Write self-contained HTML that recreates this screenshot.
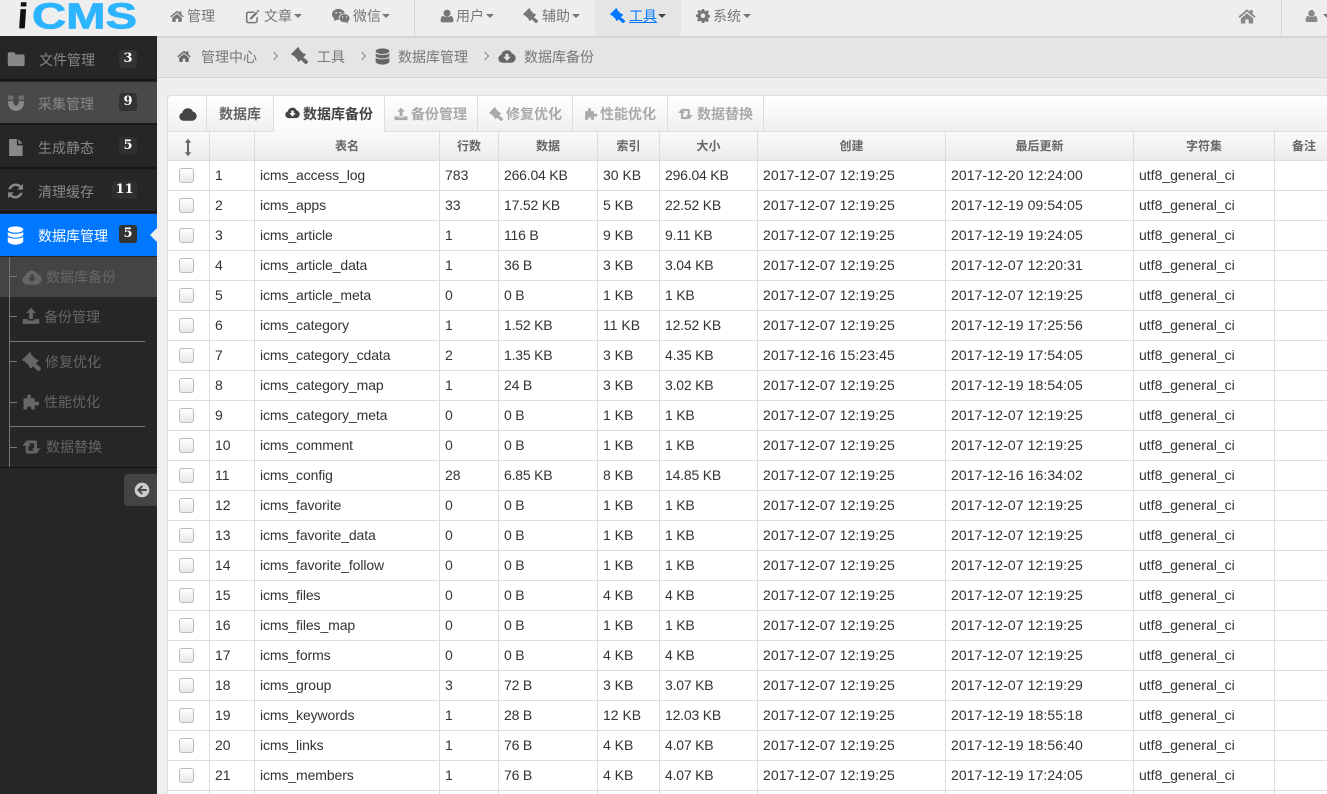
<!DOCTYPE html>
<html lang="zh"><head><meta charset="utf-8"><title>iCMS</title>
<style>
html,body{margin:0;padding:0;width:1327px;height:794px;overflow:hidden}
body{position:relative;background:#eee;font:14px/20px "Liberation Sans","Noto Sans CJK SC",sans-serif;color:#333}
.a{position:absolute;white-space:nowrap}
svg.i{position:absolute;fill:currentColor;display:block}
#top{position:absolute;left:0;top:0;width:1327px;height:36px;background:#eee;border-bottom:2px solid #d6d6d6;color:#777}
#crumb{position:absolute;left:157px;top:38px;width:1170px;height:39px;background:#e5e5e5;border-bottom:1px solid #d4d4d4;color:#777}
#side{position:absolute;left:0;top:36px;width:157px;height:758px;background:#262626;color:#888}
.car{position:absolute;width:0;height:0;border:4px solid transparent;border-top-color:currentColor;border-bottom:0;top:14px}
.sep{position:absolute;width:1px;background:#d6d6d6;top:0;height:36px}
.mi{position:absolute;left:0;width:157px;height:42px;background:#262626;border-bottom:2px solid #161616}
.bd{position:absolute;top:13px;height:18px;min-width:18px;background:#333;border-radius:3px;color:#fff;font:bold 13px/18px "DejaVu Serif","Liberation Serif",serif;text-align:center}
.tk{position:absolute;left:10px;width:7px;height:1px;background:#777}
.hr{position:absolute;left:10px;width:135px;height:1px;background:#777}
#box{position:absolute;left:167px;top:95px;width:1160px;height:699px;overflow:hidden;background:#fff;border-left:1px solid #ddd;border-top:1px solid #ddd;border-radius:4px 0 0 0}
#tabs{position:absolute;left:0;top:0;width:1160px;height:35px;background:linear-gradient(#fff,#f0f0f0);border-bottom:1px solid #ddd;color:#aaa;font-weight:bold}
.ts{position:absolute;top:0;width:1px;height:35px;background:#ddd}
table{position:absolute;left:0;top:36px;border-collapse:separate;border-spacing:0;table-layout:fixed;width:1166px}
th{height:28px;padding:0;font-size:12px;line-height:16px;font-weight:bold;color:#666;background:linear-gradient(#fafafa,#ececec);border-right:1px solid #ddd;border-bottom:1px solid #ddd;text-align:center}
td{height:27px;padding:0 0 2px 5px;border-right:1px solid #ddd;border-bottom:1px solid #ddd;color:#333;white-space:nowrap;overflow:hidden}
td:nth-child(3){letter-spacing:-.1px}
td:nth-child(5),td:nth-child(7){letter-spacing:-.2px}
td:nth-child(8),td:nth-child(9){letter-spacing:.1px}
td.c{padding:0;height:29px}
td.c i{display:block;width:13px;height:13px;margin:0 0 0 11px;border:1px solid #bbb;border-radius:3px;background:linear-gradient(#fff,#e8e8e8)}
</style></head><body>
<svg width="0" height="0" style="position:absolute"><defs>
<symbol id="home" viewBox="0 0 24 24"><path d="M12 3 0.5 12.6l1.6 1.9L12 6.2l9.9 8.3 1.6-1.9-4-3.4V4h-3.4v2.3zM12 8.4 3.8 15.2V22h6v-5.5h4.4V22h6v-6.8z"/></symbol>
<symbol id="edit" viewBox="0 0 24 24"><path d="M5 4h11l-2 2.4H5.400A1.500 1.500 0 0 0 4 8v11a1.500 1.500 0 0 0 1.400 1.500h11A1.500 1.500 0 0 0 18 19v-5l2.400-2.400V19a4 4 0 0 1-4 4H5a4 4 0 0 1-3.500-4V8A4 4 0 0 1 5 4zM20.500 1 23 3.500l-1.800 1.800-2.500-2.500zM17.800 4.100l2.500 2.500-9.500 9.500-3.300.8.800-3.300z"/></symbol>
<symbol id="wechat" viewBox="0 0 28 24"><ellipse cx="10" cy="9.500" rx="10" ry="8.500"/><path d="M4 15 3 20l6-3z"/><ellipse cx="19.500" cy="15.500" rx="8.500" ry="7" stroke="#eee" stroke-width="1.200"/><path d="M24 20l2 3.500-5-2z"/><circle cx="6.500" cy="7" r="1.400" fill="#eee"/><circle cx="13" cy="7" r="1.400" fill="#eee"/><circle cx="16.500" cy="13.500" r="1.100" fill="#eee"/><circle cx="22.500" cy="13.500" r="1.100" fill="#eee"/></symbol>
<symbol id="user" viewBox="0 0 24 24"><circle cx="12" cy="7" r="6"/><path d="M5 11.500C7 14 17 14 19 11.500 22 12.500 23 17 23 20c0 2-1.500 3-3 3H4c-1.500 0-3-1-3-3 0-3 1-7.500 4-8.500z"/></symbol>
<symbol id="gavel" viewBox="0 0 24 24"><path d="M10 0 0 10l2 2 1-.5 6.500 6.500-.5 1 2 2L21 11l-2-2-1 .5L11.500 3l.5-1zM14.500 12.500 11.500 15.500l7.800 7.800c.9.900 2.300.900 3.200 0l.8-.8c.9-.9.900-2.300 0-3.200z"/></symbol>
<symbol id="cog" viewBox="0 0 24 24"><path fill-rule="evenodd" d="M10 1h4l.6 3.200 2 .8L19.400 3.200l2.800 2.800-1.800 2.800.8 2 3.200.6v4l-3.200.6-.8 2 1.800 2.800-2.800 2.800-2.800-1.800-2 .8L14 25h-4l-.6-3.200-2-.8-2.800 1.800-2.800-2.800 1.800-2.800-.8-2L0 14.600v-4l3.200-.6.800-2L2.200 5.200 5 2.400l2.800 1.800 2-.8zM12 8.600a4 4 0 1 0 0 8 4 4 0 0 0 0-8z" transform="translate(0 -1)"/></symbol>
<symbol id="folder" viewBox="0 0 24 24"><path d="M1 5.500A2.500 2.500 0 0 1 3.500 3h5A2.500 2.500 0 0 1 11 5.500V6h10a2.500 2.500 0 0 1 2.500 2.500V19a2.500 2.500 0 0 1-2.500 2.500H3.500A2.500 2.500 0 0 1 1 19z"/></symbol>
<symbol id="magnet" viewBox="0 0 24 24"><path d="M1.500 2h7v6h-7zM15.500 2h7v6h-7z" opacity=".6"/><path d="M1.500 9.500h7V12a3.500 3.500 0 0 0 7 0V9.500h7V12a10.500 10.500 0 0 1-21 0z"/></symbol>
<symbol id="file" viewBox="0 0 24 24"><path d="M3 0h11v9h8v15H3zM16 0l6 6.500h-6z"/></symbol>
<symbol id="refresh" viewBox="0 0 24 24"><path d="M22.500 2v8h-8l3-3a7.500 7.500 0 0 0-12 2.500H1.800A11 11 0 0 1 20 4.500zM1.500 22v-8h8l-3 3a7.500 7.500 0 0 0 12-2.500h3.700A11 11 0 0 1 4 19.500z"/></symbol>
<symbol id="db" viewBox="0 0 24 27"><ellipse cx="12" cy="5" rx="11" ry="4.500"/><path d="M1 8.300C3 11.800 21 11.800 23 8.300V12C23 14.500 18 16.500 12 16.500S1 14.500 1 12z"/><path d="M1 15.300C3 18.800 21 18.800 23 15.300V21.500C23 24 18 26.500 12 26.500S1 24 1 21.500z"/></symbol>
<symbol id="cloud" viewBox="0 0 24 24"><path d="M6 21A5.500 5.500 0 0 1 4.500 10.200 7.500 7.500 0 0 1 18.600 8.600 6.300 6.300 0 0 1 18 21z"/></symbol>
<symbol id="clouddl" viewBox="0 0 24 24"><path fill-rule="evenodd" d="M6 21A5.500 5.500 0 0 1 4.500 10.200 7.500 7.500 0 0 1 18.600 8.600 6.300 6.300 0 0 1 18 21zM10 9v4H7l5 5.500 5-5.500h-3V9z"/></symbol>
<symbol id="upload" viewBox="0 0 24 24"><path d="M12 1l6.500 7H14.500v8h-5V8H5.500zM1 16h6.500v2h9v-2H23v6.500H1z"/></symbol>
<symbol id="puzzle" viewBox="0 0 24 24"><path d="M2 7h5.500C6 4 7 2 9.500 2S13 4 11.500 7H17v5c3-1.500 6-.5 6 2s-3 3.500-6 2v6h-5c1-2.500 0-4-2.500-4S6 19.500 7 22H2z"/></symbol>
<symbol id="retweet" viewBox="-1 0 28 24"><path d="M6 2l6.500 8H8.500v7.500H16l3.500 4H6.500a2 2 0 0 1-2-2V10H-.5z"/><path d="M20 22l-6.500-8h3.500V6.500H10l-3.500-4H19a2 2 0 0 1 2 2V14h5.500z"/></symbol>
<symbol id="back" viewBox="0 0 24 24"><path fill-rule="evenodd" d="M12 1a11 11 0 1 1 0 22 11 11 0 0 1 0-22zM11.500 5 4.500 12l7 7 2-2-3.500-3.500h9v-3h-9L13.500 7z"/></symbol>
<symbol id="sort" viewBox="0 0 10 24"><path d="M5 1l4 5H6.300v12H9l-4 5-4-5h2.700V6H1z"/></symbol>
</defs></svg>

<div id="top">
<svg class="a" style="left:14px;top:0" width="130" height="36"><text x="3" y="28" transform="skewX(-4) translate(2 0)" font-family="Liberation Sans" font-weight="bold" font-size="35" fill="#111" stroke="#111" stroke-width=".7" textLength="10" lengthAdjust="spacingAndGlyphs">i</text><text x="18" y="28.500" font-family="Liberation Sans" font-weight="bold" font-size="36" fill="#2db4ff" stroke="#2db4ff" stroke-width=".8" textLength="105" lengthAdjust="spacingAndGlyphs">CMS</text></svg>
<svg class="i" style="left:170px;top:9px" width="14" height="14"><use href="#home"/></svg><span class="a" style="left:187px;top:6px">管理</span>
<svg class="i" style="left:245px;top:9px" width="15" height="15"><use href="#edit"/></svg><span class="a" style="left:264px;top:6px">文章</span><i class="car" style="left:294px"></i>
<svg class="i" style="left:332px;top:8px" width="18" height="16"><use href="#wechat"/></svg><span class="a" style="left:353px;top:6px">微信</span><i class="car" style="left:382px"></i>
<div class="sep" style="left:414px"></div>
<svg class="i" style="left:440px;top:9px" width="14" height="14"><use href="#user"/></svg><span class="a" style="left:456px;top:6px">用户</span><i class="car" style="left:486px"></i>
<svg class="i" style="left:523px;top:8px" width="15" height="15"><use href="#gavel"/></svg><span class="a" style="left:542px;top:6px">辅助</span><i class="car" style="left:572px"></i>
<div class="a" style="left:595px;top:0;width:86px;height:36px;background:#e5e5e5"></div>
<svg class="i" style="left:610px;top:8px;color:#07f" width="15" height="15"><use href="#gavel"/></svg><span class="a" style="left:629px;top:6px;color:#07f;text-decoration:underline">工具</span><i class="car" style="left:658px;color:#444"></i>
<svg class="i" style="left:696px;top:9px" width="14" height="14"><use href="#cog"/></svg><span class="a" style="left:713px;top:6px">系统</span><i class="car" style="left:743px"></i>
<svg class="i" style="left:1238px;top:7px;color:#888" width="18" height="18"><use href="#home"/></svg>
<div class="sep" style="left:1281px"></div>
<svg class="i" style="left:1305px;top:9px;color:#888" width="13" height="14"><use href="#user"/></svg><i class="car" style="left:1323px"></i>
</div>

<div id="crumb">
<svg class="i" style="left:20px;top:11px;color:#666" width="14" height="14"><use href="#home"/></svg><span class="a" style="left:44px;top:9px">管理中心</span>
<span class="a" style="left:114px;top:15px;width:5px;height:5px;border-top:1px solid #888;border-right:1px solid #888;transform:rotate(45deg)"></span>
<svg class="i" style="left:134px;top:9px;color:#666" width="17" height="17"><use href="#gavel"/></svg><span class="a" style="left:160px;top:9px">工具</span>
<span class="a" style="left:202px;top:15px;width:5px;height:5px;border-top:1px solid #888;border-right:1px solid #888;transform:rotate(45deg)"></span>
<svg class="i" style="left:218px;top:10px;color:#666" width="15" height="17"><use href="#db"/></svg><span class="a" style="left:241px;top:9px">数据库管理</span>
<span class="a" style="left:325px;top:15px;width:5px;height:5px;border-top:1px solid #888;border-right:1px solid #888;transform:rotate(45deg)"></span>
<svg class="i" style="left:341px;top:9px;color:#666" width="18" height="18"><use href="#clouddl"/></svg><span class="a" style="left:367px;top:9px">数据库备份</span>
</div>

<div id="side">
<div class="mi" style="top:1px">
<svg class="i" style="left:7px;top:13px" width="18" height="18"><use href="#folder"/></svg><span class="a" style="left:39px;top:13px">文件管理</span><span class="bd" style="left:119px">3</span></div>
<div class="mi" style="background:#494949;top:46px;height:41px">
<svg class="i" style="left:7px;top:12px" width="18" height="18"><use href="#magnet"/></svg><span class="a" style="left:38px;top:12px">采集管理</span><span class="bd" style="left:119px;top:11px">9</span></div>
<div class="mi" style="top:89px;height:42px">
<svg class="i" style="left:7px;top:13px" width="17" height="19"><use href="#file"/></svg><span class="a" style="left:38px;top:13px">生成静态</span><span class="bd" style="left:119px;background:#2f2f2f;top:12px">5</span></div>
<div class="mi" style="top:133px;height:42px">
<svg class="i" style="left:7px;top:13px" width="17" height="18"><use href="#refresh"/></svg><span class="a" style="left:38px;top:13px">清理缓存</span><span class="bd" style="left:112px;width:25px;background:#2f2f2f;top:12px">11</span></div>
<div class="a" style="left:0;top:178px;width:157px;height:42px;background:#07f;color:#fff">
<svg class="i" style="left:7px;top:12px" width="17" height="19"><use href="#db"/></svg><span class="a" style="left:38px;top:12px">数据库管理</span><span class="bd" style="left:119px;top:11px">5</span>
<i class="a" style="left:150px;top:14px;border:7px solid transparent;border-right-color:#eee;border-left:0"></i></div>
<div class="a" style="left:0;top:221px;width:157px;height:40px;background:#444"></div>
<div class="a" style="left:9px;top:221px;width:1px;height:210px;background:#777"></div>
<i class="tk" style="top:240px"></i><i class="tk" style="top:280px"></i><i class="hr" style="top:305px"></i><i class="tk" style="top:325px"></i><i class="tk" style="top:366px"></i><i class="hr" style="top:390px"></i><i class="tk" style="top:411px"></i>
<div style="color:#666">
<svg class="i" style="left:22px;top:231px" width="20" height="20"><use href="#clouddl"/></svg><span class="a" style="left:46px;top:231px">数据库备份</span>
<svg class="i" style="left:22px;top:271px" width="18" height="18"><use href="#upload"/></svg><span class="a" style="left:44px;top:271px">备份管理</span>
<svg class="i" style="left:22px;top:316px" width="19" height="19"><use href="#gavel"/></svg><span class="a" style="left:45px;top:316px">修复优化</span>
<svg class="i" style="left:22px;top:357px" width="18" height="18"><use href="#puzzle"/></svg><span class="a" style="left:44px;top:356px">性能优化</span>
<svg class="i" style="left:22px;top:402px" width="19" height="18"><use href="#retweet"/></svg><span class="a" style="left:46px;top:401px">数据替换</span>
</div>
<div class="a" style="left:0;top:431px;width:157px;height:1px;background:#111"></div>
<div class="a" style="left:124px;top:438px;width:33px;height:32px;background:#444;border-radius:4px 0 0 4px"></div>
<svg class="i" style="left:134px;top:446px;color:#ccc" width="16" height="16"><use href="#back"/></svg>
</div>

<div id="box">
<div id="tabs">
<svg class="i" style="left:11px;top:9px;color:#444" width="18" height="18"><use href="#cloud"/></svg>
<i class="ts" style="left:38px"></i>
<span class="a" style="left:51px;top:8px;color:#666">数据库</span>
<i class="ts" style="left:105px"></i>
<div class="a" style="left:106px;top:-2px;width:110px;height:38px;background:linear-gradient(#fff,#f9f9f9);border-top:2px solid #07f;box-sizing:border-box;color:#444">
<svg class="i" style="left:11px;top:9px" width="15" height="15"><use href="#clouddl"/></svg><span class="a" style="left:29px;top:8px">数据库备份</span></div>
<i class="ts" style="left:216px"></i>
<svg class="i" style="left:226px;top:11px" width="14" height="14"><use href="#upload"/></svg><span class="a" style="left:243px;top:8px">备份管理</span>
<i class="ts" style="left:309px"></i>
<svg class="i" style="left:321px;top:11px" width="14" height="14"><use href="#gavel"/></svg><span class="a" style="left:338px;top:8px">修复优化</span>
<i class="ts" style="left:404px"></i>
<svg class="i" style="left:416px;top:11px" width="14" height="14"><use href="#puzzle"/></svg><span class="a" style="left:432px;top:8px">性能优化</span>
<i class="ts" style="left:499px"></i>
<svg class="i" style="left:510px;top:11px" width="15" height="14"><use href="#retweet"/></svg><span class="a" style="left:529px;top:8px">数据替换</span>
<i class="ts" style="left:595px"></i>
</div>
<svg class="i" style="left:16px;top:42px;color:#666;z-index:2" width="8" height="19"><use href="#sort"/></svg>
<table>
<colgroup><col style="width:42px"><col style="width:45px"><col style="width:185px"><col style="width:59px"><col style="width:99px"><col style="width:62px"><col style="width:98px"><col style="width:188px"><col style="width:188px"><col style="width:141px"><col style="width:59px"></colgroup>
<tr><th></th><th></th><th>表名</th><th>行数</th><th>数据</th><th>索引</th><th>大小</th><th>创建</th><th>最后更新</th><th>字符集</th><th>备注</th></tr>
<tr><td class="c"><i></i></td><td>1</td><td>icms_access_log</td><td>783</td><td>266.04 KB</td><td>30 KB</td><td>296.04 KB</td><td>2017-12-07 12:19:25</td><td>2017-12-20 12:24:00</td><td>utf8_general_ci</td><td></td></tr>
<tr><td class="c"><i></i></td><td>2</td><td>icms_apps</td><td>33</td><td>17.52 KB</td><td>5 KB</td><td>22.52 KB</td><td>2017-12-07 12:19:25</td><td>2017-12-19 09:54:05</td><td>utf8_general_ci</td><td></td></tr>
<tr><td class="c"><i></i></td><td>3</td><td>icms_article</td><td>1</td><td>116 B</td><td>9 KB</td><td>9.11 KB</td><td>2017-12-07 12:19:25</td><td>2017-12-19 19:24:05</td><td>utf8_general_ci</td><td></td></tr>
<tr><td class="c"><i></i></td><td>4</td><td>icms_article_data</td><td>1</td><td>36 B</td><td>3 KB</td><td>3.04 KB</td><td>2017-12-07 12:19:25</td><td>2017-12-07 12:20:31</td><td>utf8_general_ci</td><td></td></tr>
<tr><td class="c"><i></i></td><td>5</td><td>icms_article_meta</td><td>0</td><td>0 B</td><td>1 KB</td><td>1 KB</td><td>2017-12-07 12:19:25</td><td>2017-12-07 12:19:25</td><td>utf8_general_ci</td><td></td></tr>
<tr><td class="c"><i></i></td><td>6</td><td>icms_category</td><td>1</td><td>1.52 KB</td><td>11 KB</td><td>12.52 KB</td><td>2017-12-07 12:19:25</td><td>2017-12-19 17:25:56</td><td>utf8_general_ci</td><td></td></tr>
<tr><td class="c"><i></i></td><td>7</td><td>icms_category_cdata</td><td>2</td><td>1.35 KB</td><td>3 KB</td><td>4.35 KB</td><td>2017-12-16 15:23:45</td><td>2017-12-19 17:54:05</td><td>utf8_general_ci</td><td></td></tr>
<tr><td class="c"><i></i></td><td>8</td><td>icms_category_map</td><td>1</td><td>24 B</td><td>3 KB</td><td>3.02 KB</td><td>2017-12-07 12:19:25</td><td>2017-12-19 18:54:05</td><td>utf8_general_ci</td><td></td></tr>
<tr><td class="c"><i></i></td><td>9</td><td>icms_category_meta</td><td>0</td><td>0 B</td><td>1 KB</td><td>1 KB</td><td>2017-12-07 12:19:25</td><td>2017-12-07 12:19:25</td><td>utf8_general_ci</td><td></td></tr>
<tr><td class="c"><i></i></td><td>10</td><td>icms_comment</td><td>0</td><td>0 B</td><td>1 KB</td><td>1 KB</td><td>2017-12-07 12:19:25</td><td>2017-12-07 12:19:25</td><td>utf8_general_ci</td><td></td></tr>
<tr><td class="c"><i></i></td><td>11</td><td>icms_config</td><td>28</td><td>6.85 KB</td><td>8 KB</td><td>14.85 KB</td><td>2017-12-07 12:19:25</td><td>2017-12-16 16:34:02</td><td>utf8_general_ci</td><td></td></tr>
<tr><td class="c"><i></i></td><td>12</td><td>icms_favorite</td><td>0</td><td>0 B</td><td>1 KB</td><td>1 KB</td><td>2017-12-07 12:19:25</td><td>2017-12-07 12:19:25</td><td>utf8_general_ci</td><td></td></tr>
<tr><td class="c"><i></i></td><td>13</td><td>icms_favorite_data</td><td>0</td><td>0 B</td><td>1 KB</td><td>1 KB</td><td>2017-12-07 12:19:25</td><td>2017-12-07 12:19:25</td><td>utf8_general_ci</td><td></td></tr>
<tr><td class="c"><i></i></td><td>14</td><td>icms_favorite_follow</td><td>0</td><td>0 B</td><td>1 KB</td><td>1 KB</td><td>2017-12-07 12:19:25</td><td>2017-12-07 12:19:25</td><td>utf8_general_ci</td><td></td></tr>
<tr><td class="c"><i></i></td><td>15</td><td>icms_files</td><td>0</td><td>0 B</td><td>4 KB</td><td>4 KB</td><td>2017-12-07 12:19:25</td><td>2017-12-07 12:19:25</td><td>utf8_general_ci</td><td></td></tr>
<tr><td class="c"><i></i></td><td>16</td><td>icms_files_map</td><td>0</td><td>0 B</td><td>1 KB</td><td>1 KB</td><td>2017-12-07 12:19:25</td><td>2017-12-07 12:19:25</td><td>utf8_general_ci</td><td></td></tr>
<tr><td class="c"><i></i></td><td>17</td><td>icms_forms</td><td>0</td><td>0 B</td><td>4 KB</td><td>4 KB</td><td>2017-12-07 12:19:25</td><td>2017-12-07 12:19:25</td><td>utf8_general_ci</td><td></td></tr>
<tr><td class="c"><i></i></td><td>18</td><td>icms_group</td><td>3</td><td>72 B</td><td>3 KB</td><td>3.07 KB</td><td>2017-12-07 12:19:25</td><td>2017-12-07 12:19:29</td><td>utf8_general_ci</td><td></td></tr>
<tr><td class="c"><i></i></td><td>19</td><td>icms_keywords</td><td>1</td><td>28 B</td><td>12 KB</td><td>12.03 KB</td><td>2017-12-07 12:19:25</td><td>2017-12-19 18:55:18</td><td>utf8_general_ci</td><td></td></tr>
<tr><td class="c"><i></i></td><td>20</td><td>icms_links</td><td>1</td><td>76 B</td><td>4 KB</td><td>4.07 KB</td><td>2017-12-07 12:19:25</td><td>2017-12-19 18:56:40</td><td>utf8_general_ci</td><td></td></tr>
<tr><td class="c"><i></i></td><td>21</td><td>icms_members</td><td>1</td><td>76 B</td><td>4 KB</td><td>4.07 KB</td><td>2017-12-07 12:19:25</td><td>2017-12-19 17:24:05</td><td>utf8_general_ci</td><td></td></tr>
<tr><td class="c"></td><td></td><td></td><td></td><td></td><td></td><td></td><td></td><td></td><td></td><td></td></tr>
</table>
</div>
</body></html>
